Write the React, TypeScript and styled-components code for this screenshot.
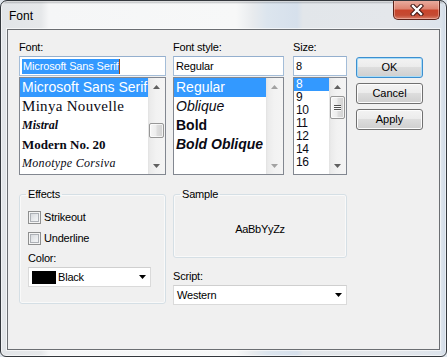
import React from 'react'
import styled, { createGlobalStyle } from 'styled-components'

const GlobalStyle = createGlobalStyle`
  html, body {
    margin: 0;
    padding: 0;
    width: 447px;
    height: 357px;
    overflow: hidden;
    background: #dfe5ec;
  }

  body {
    font-family: 'Liberation Sans', Arial, sans-serif;
    font-size: 11px;
    color: #000;
  }

  * {
    box-sizing: border-box;
  }
`

const Window = styled.div`
  width: 447px;
  height: 357px;
  border: 1px solid #34383d;
  border-radius: 7px 7px 6px 6px;
  box-shadow: inset 0 0 0 1px rgba(255, 255, 255, 0.55);
  display: flex;
  flex-direction: column;
  overflow: hidden;
  background:
    linear-gradient(to bottom, rgba(40, 44, 50, 0.4) 0, rgba(40, 44, 50, 0) 3px),
    linear-gradient(
      to right,
      #e2e5e8 0,
      #e6e8ea 40px,
      #f5f6f7 48px,
      #f7f8f8 235px,
      #e8ebee 252px,
      #dce5ee 266px,
      #d6e0ec 296px,
      #e2e6ea 302px,
      #e4e7eb 388px,
      #dde4ec 440px,
      #c9d5e4 447px
    );
`

const TitleBar = styled.div`
  height: 28px;
  flex: none;
  display: flex;
  justify-content: space-between;
  align-items: flex-start;
  padding-left: 8px;
`

const Title = styled.span`
  margin-top: 8px;
  font-size: 12px;
  line-height: 14px;
`

const CloseButton = styled.div`
  width: 47px;
  height: 20px;
  margin-top: -1px;
  margin-right: 6px;
  border: 1px solid #5c2219;
  border-top: none;
  border-radius: 0 0 5px 5px;
  background: linear-gradient(
    to bottom,
    #eab0a3 0%,
    #de8572 45%,
    #c8452c 55%,
    #c44b33 80%,
    #d8806b 100%
  );
  box-shadow: inset 0 0 0 1px rgba(255, 215, 205, 0.45);
  display: flex;
  align-items: center;
  justify-content: center;
`

const Client = styled.div`
  flex: 1;
  margin: 0 6px 6px;
  border: 1px solid #6b6e72;
  box-shadow: 0 0 0 1px rgba(255, 255, 255, 0.6);
  background: #f0f0f0;
  padding: 11px 0 0 11px;
  display: flex;
  flex-direction: column;
`

const Row = styled.div<{ $top?: number }>`
  display: flex;
  align-items: flex-start;
  margin-top: ${p => p.$top ?? 0}px;
`

const Col = styled.div<{ $w: number; $gap?: number; $top?: number }>`
  width: ${p => p.$w}px;
  margin-right: ${p => p.$gap ?? 0}px;
  margin-top: ${p => p.$top ?? 0}px;
  display: flex;
  flex-direction: column;
  flex: none;
`

const Label = styled.div`
  height: 13px;
  line-height: 13px;
  margin-bottom: 2px;
  letter-spacing: -0.2px;
  white-space: nowrap;
`

const TextBox = styled.div`
  height: 20px;
  border: 1px solid #a4bdd8;
  border-top-color: #94afce;
  background: #fff;
  padding: 0 2px;
  line-height: 18px;
  white-space: nowrap;
  overflow: hidden;
  letter-spacing: -0.15px;
`

const Selection = styled.span`
  display: inline-block;
  vertical-align: top;
  margin-top: 2px;
  line-height: 14px;
  height: 15px;
  padding: 0 1px;
  background: #3399ff;
  color: #fff;
  border-right: 1px solid #a04a10;
`

const ListBox = styled.div`
  margin-top: 1px;
  height: 98px;
  border: 1px solid #828790;
  background: #fff;
  display: flex;
  overflow: hidden;
`

const Items = styled.div`
  flex: 1;
  min-width: 0;
  overflow: hidden;
`

const Item = styled.div<{
  $h: number
  $size: number
  $family?: string
  $weight?: number
  $italic?: boolean
  $selected?: boolean
  $spacing?: number
}>`
  height: ${p => p.$h}px;
  line-height: ${p => p.$h}px;
  padding-left: 2px;
  white-space: nowrap;
  overflow: hidden;
  font-family: ${p => p.$family ?? "'Liberation Sans', Arial, sans-serif"};
  font-size: ${p => p.$size}px;
  font-weight: ${p => p.$weight ?? 400};
  font-style: ${p => (p.$italic ? 'italic' : 'normal')};
  letter-spacing: ${p => p.$spacing ?? 0}px;
  background: ${p => (p.$selected ? '#3399ff' : 'transparent')};
  color: ${p => (p.$selected ? '#fff' : '#0a0a14')};
`

const ScrollBar = styled.div`
  width: 17px;
  flex: none;
  display: flex;
  flex-direction: column;
  background: linear-gradient(
    to right,
    #e2e2e2 0,
    #ebebeb 2px,
    #f2f2f2 8px,
    #f4f4f4 100%
  );
`

const ScrollArrow = styled.div<{ $disabled?: boolean }>`
  height: 17px;
  flex: none;
  display: flex;
  align-items: center;
  justify-content: center;

  svg {
    fill: ${p => (p.$disabled ? '#a2a2a2' : '#606060')};
  }
`

const Track = styled.div`
  flex: 1;
  padding: 0 1px 0 1px;
`

const Thumb = styled.div<{ $top: number; $h: number }>`
  margin-top: ${p => p.$top}px;
  height: ${p => p.$h}px;
  border: 1px solid #979797;
  border-radius: 2px;
  background: linear-gradient(
    to right,
    #f6f6f6 0%,
    #ededed 45%,
    #dedede 55%,
    #d1d1d1 100%
  );
  box-shadow: inset 0 0 0 1px rgba(255, 255, 255, 0.7);
  display: flex;
  flex-direction: column;
  align-items: center;
  justify-content: center;
  gap: 1px;
`

const Grip = styled.span`
  width: 7px;
  height: 1px;
  background: #505050;
  box-shadow: 0 1px 0 #fafafa;
`

const Button = styled.div<{ $default?: boolean }>`
  width: 67px;
  height: 21px;
  margin-bottom: 5px;
  border: 1px solid ${p => (p.$default ? '#3c8fd0' : '#707070')};
  border-radius: 3px;
  background: linear-gradient(
    to bottom,
    #f3f3f3 0%,
    #ebebeb 50%,
    #dddddd 50%,
    #cfcfcf 100%
  );
  box-shadow: inset 0 0 0 1px ${p => (p.$default ? '#a8dcf7' : '#fcfcfc')};
  display: flex;
  align-items: center;
  justify-content: center;
  line-height: 13px;
`

const GroupBox = styled.fieldset<{
  $w: number
  $h: number
  $gap?: number
  $pad?: number
}>`
  margin: 0 ${p => p.$gap ?? 0}px 0 0;
  width: ${p => p.$w}px;
  height: ${p => p.$h}px;
  min-width: 0;
  flex: none;
  border: 1px solid #d5dfe5;
  border-radius: 3px;
  box-shadow: inset 0 0 0 1px rgba(255, 255, 255, 0.6);
  padding: ${p => p.$pad ?? 0}px 8px 0;
`

const GroupTitle = styled.legend`
  padding: 0 2px;
  margin-left: -2px;
  line-height: 13px;
  font-size: 11px;
  letter-spacing: -0.2px;
`

const CheckRow = styled.div<{ $gap: number }>`
  height: 13px;
  display: flex;
  align-items: center;
  gap: 3px;
  margin-bottom: ${p => p.$gap}px;
  line-height: 13px;
  letter-spacing: -0.2px;
`

const CheckBox = styled.span`
  width: 13px;
  height: 13px;
  flex: none;
  border: 1px solid #8e8f8f;
  background: linear-gradient(135deg, #cfd2d6 0%, #eceef0 60%, #f8f8f8 100%);
  box-shadow: inset 0 0 0 1px #f4f4f4, inset 0 0 0 2px #adb1b6;
`

const ComboBox = styled.div<{ $w: number }>`
  width: ${p => p.$w}px;
  height: 20px;
  border: 1px solid #dadada;
  border-top-color: #cfcfcf;
  background: #fff;
  display: flex;
  align-items: center;
  gap: 2px;
  padding: 0 4px 0 3px;
  letter-spacing: -0.2px;
`

const ComboText = styled.span`
  flex: 1;
  line-height: 13px;
  white-space: nowrap;
`

const Swatch = styled.span<{ $color: string }>`
  width: 24px;
  height: 13px;
  flex: none;
  background: ${p => p.$color};
`

const SampleArea = styled.div`
  height: 56px;
  margin: 0 -8px;
  display: flex;
  align-items: center;
  justify-content: center;
  line-height: 13px;
  letter-spacing: -0.3px;
`

const Arrow = ({ up = false }: { up?: boolean }) => (
  <svg width="7" height="4" viewBox="0 0 7 4">
    <polygon points={up ? '0,4 3.5,0 7,4' : '0,0 7,0 3.5,4'} />
  </svg>
)

const DropArrow = () => (
  <svg width="7" height="4" viewBox="0 0 7 4" style={{ flex: 'none' }}>
    <polygon points="0,0 7,0 3.5,4" fill="#000" />
  </svg>
)

const CloseGlyph = () => (
  <svg width="14" height="12" viewBox="0 0 14 12">
    <path d="M3 2 L11 10 M11 2 L3 10" stroke="#3c1410" strokeWidth="4.4" strokeLinecap="square" />
    <path d="M3 2 L11 10 M11 2 L3 10" stroke="#fff" strokeWidth="2.4" strokeLinecap="square" />
  </svg>
)

const Scroller = ({
  thumb,
  grip = false,
  disabled = false,
}: {
  thumb?: { top: number; h: number }
  grip?: boolean
  disabled?: boolean
}) => (
  <ScrollBar>
    <ScrollArrow $disabled={disabled}>
      <Arrow up />
    </ScrollArrow>
    <Track>
      {thumb && (
        <Thumb $top={thumb.top} $h={thumb.h}>
          {grip && (
            <>
              <Grip />
              <Grip />
              <Grip />
            </>
          )}
        </Thumb>
      )}
    </Track>
    <ScrollArrow $disabled={disabled}>
      <Arrow />
    </ScrollArrow>
  </ScrollBar>
)

const serif = "'Liberation Serif', 'Times New Roman', serif"

const sizes = ['8', '9', '10', '11', '12', '14', '16']

const App = () => (
  <>
    <GlobalStyle />
    <Window>
      <TitleBar>
        <Title>Font</Title>
        <CloseButton>
          <CloseGlyph />
        </CloseButton>
      </TitleBar>
      <Client>
        <Row>
          <Col $w={147} $gap={7}>
            <Label>Font:</Label>
            <TextBox>
              <Selection>Microsoft Sans Serif</Selection>
            </TextBox>
            <ListBox>
              <Items>
                <Item $h={19} $size={14} $selected>
                  Microsoft Sans Serif
                </Item>
                <Item $h={19} $size={15} $family={serif} $spacing={0.3}>
                  Minya Nouvelle
                </Item>
                <Item $h={19} $size={12} $family={serif} $italic $weight={700}>
                  Mistral
                </Item>
                <Item $h={19} $size={13} $family={serif} $weight={700}>
                  Modern No. 20
                </Item>
                <Item $h={19} $size={12} $family={serif} $italic $spacing={0.3}>
                  Monotype Corsiva
                </Item>
              </Items>
              <Scroller thumb={{ top: 28, h: 15 }} />
            </ListBox>
          </Col>
          <Col $w={111} $gap={9}>
            <Label>Font style:</Label>
            <TextBox>Regular</TextBox>
            <ListBox>
              <Items>
                <Item $h={19} $size={14} $selected>
                  Regular
                </Item>
                <Item $h={19} $size={14} $italic>
                  Oblique
                </Item>
                <Item $h={19} $size={14} $weight={700}>
                  Bold
                </Item>
                <Item $h={19} $size={14} $weight={700} $italic>
                  Bold Oblique
                </Item>
              </Items>
              <Scroller disabled />
            </ListBox>
          </Col>
          <Col $w={54} $gap={9}>
            <Label>Size:</Label>
            <TextBox>8</TextBox>
            <ListBox>
              <Items>
                {sizes.map((s, i) => (
                  <Item key={s} $h={13} $size={12} $spacing={-0.5} $selected={i === 0}>
                    {s}
                  </Item>
                ))}
              </Items>
              <Scroller thumb={{ top: 1, h: 23 }} grip />
            </ListBox>
          </Col>
          <Col $w={67} $top={16}>
            <Button $default>OK</Button>
            <Button>Cancel</Button>
            <Button>Apply</Button>
          </Col>
        </Row>
        <Row $top={13}>
          <GroupBox $w={147} $h={116} $gap={7} $pad={10}>
            <GroupTitle>Effects</GroupTitle>
            <CheckRow $gap={8}>
              <CheckBox />
              Strikeout
            </CheckRow>
            <CheckRow $gap={7}>
              <CheckBox />
              Underline
            </CheckRow>
            <Label>Color:</Label>
            <ComboBox $w={123}>
              <Swatch $color="#000" />
              <ComboText>Black</ComboText>
              <DropArrow />
            </ComboBox>
          </GroupBox>
          <Col $w={174}>
            <GroupBox $w={174} $h={70}>
              <GroupTitle>Sample</GroupTitle>
              <SampleArea>AaBbYyZz</SampleArea>
            </GroupBox>
            <Col $w={174} $top={12}>
              <Label>Script:</Label>
              <ComboBox $w={174}>
                <ComboText>Western</ComboText>
                <DropArrow />
              </ComboBox>
            </Col>
          </Col>
        </Row>
      </Client>
    </Window>
  </>
)

export default App
